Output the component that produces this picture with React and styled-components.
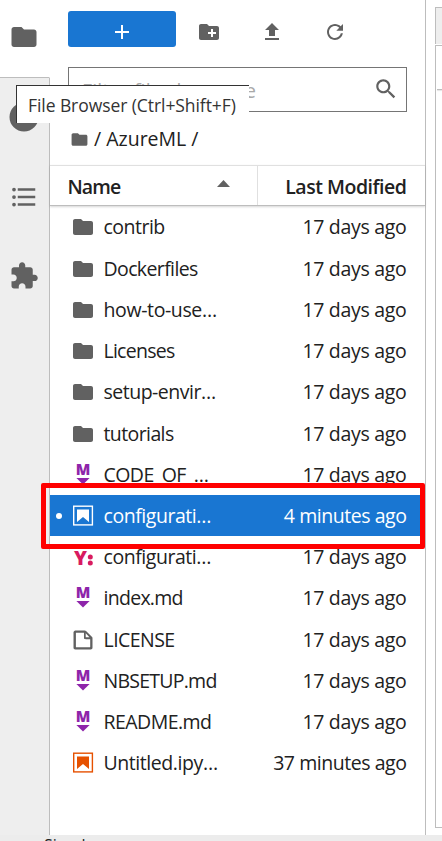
import React from "react";
import styled, { createGlobalStyle } from "styled-components";

const GlobalStyle = createGlobalStyle`
  * { box-sizing: border-box; }
  body { margin: 0; background: #fff; font-family: "Open Sans", "Noto Sans", sans-serif; }
`;

const Shell = styled.div`
  position: relative;
  width: 442px;
  height: 841px;
  overflow: hidden;
  display: flex;
  flex-direction: column;
  background: #fff;
  color: #212121;
`;
const Workspace = styled.div`
  display: flex;
  height: 835px;
  flex: none;
`;
const ActivityBar = styled.nav`
  width: 50px;
  flex: none;
  display: flex;
  flex-direction: column;
  background: #eee;
`;
const ActivityTab = styled.div`
  height: ${(p) => (p.$active ? 78 : 79.6)}px;
  flex: none;
  display: flex;
  align-items: center;
  justify-content: center;
  padding: 0 1px ${(p) => (p.$active ? 3 : 1)}px 0;
  background: ${(p) => (p.$active ? "#fff" : "transparent")};
  border-right: 1px solid ${(p) => (p.$active ? "#fff" : "#bdbdbd")};
  border-bottom: ${(p) => (p.$active ? "1px solid #bdbdbd" : "none")};
`;
const ActivityFill = styled.div`
  flex: 1;
  border-right: 1px solid #bdbdbd;
`;
const Panel = styled.section`
  width: 376px;
  flex: none;
  display: flex;
  flex-direction: column;
  border-right: 1px solid #bdbdbd;
`;
const Toolbar = styled.div`
  height: 47px;
  padding: 11px 0 0 18px;
  display: flex;
`;
const LaunchButton = styled.button`
  width: 108px;
  height: 36px;
  padding: 6px 0 0;
  border: 0;
  border-radius: 3px;
  background: #1976d2;
  display: flex;
  align-items: center;
  justify-content: center;
`;
const ToolButton = styled.button`
  width: 63px;
  height: 36px;
  padding: 6px 0 0;
  border: 0;
  background: transparent;
  display: flex;
  align-items: center;
  justify-content: center;
`;
const ToolGroup = styled.div`
  display: flex;
  padding-left: 1px;
`;
const FilterBox = styled.div`
  width: 339px;
  height: 45px;
  margin: 20px 0 0 18px;
  padding: 2px 7px 0 13px;
  border: 1px solid #757575;
  display: flex;
  align-items: center;
  justify-content: space-between;
`;
const FilterIcon = styled.span`
  padding-bottom: 4px;
`;
const Crumbs = styled.div`
  height: 53px;
  display: flex;
  align-items: center;
  padding: 1px 0 0 20.4px;
  gap: 4.6px;
`;
const Text = styled.span`
  font-size: ${(p) => p.$size || 19.5}px;
  line-height: 30px;
  font-weight: ${(p) => p.$weight || 400};
  letter-spacing: ${(p) => p.$track || 0}px;
  color: ${(p) => p.$color || "inherit"};
  white-space: nowrap;
`;
const ListHeader = styled.div`
  height: 41px;
  flex: none;
  display: flex;
  border-top: 1px solid #e0e0e0;
  border-bottom: 1px solid #bdbdbd;
  box-shadow: 0 1px 2px rgba(0, 0, 0, 0.16);
`;
const HeaderCell = styled.div`
  width: ${(p) => p.$width}px;
  display: flex;
  align-items: center;
  justify-content: space-between;
  padding: 3px ${(p) => p.$right}px 0 17.5px;
  border-right: ${(p) => (p.$divided ? "1px solid #e0e0e0" : "none")};
`;
const SortMark = styled.span`
  padding-bottom: 8px;
`;
const FileList = styled.div`
  padding-top: 0.5px;
`;
const FileRow = styled.div`
  height: 41.23px;
  width: 375px;
  display: grid;
  grid-template-columns: 21px 32.5px 1fr auto;
  align-items: center;
  padding: 0.6px 18.5px 0 0;
  background: ${(p) => (p.$selected ? "#1976d2" : "transparent")};
  color: ${(p) => (p.$selected ? "#fff" : "#212121")};
`;
const RunningDot = styled.i`
  width: 6px;
  height: 6px;
  border-radius: 50%;
  margin-left: 6px;
  background: ${(p) => (p.$on ? "#fff" : "transparent")};
`;
const MainArea = styled.main`
  width: 7px;
  height: 821px;
  margin: 7px 0 0 9px;
  flex: none;
  display: flex;
  flex-direction: column;
`;
const DockTab = styled.div`
  height: 37px;
  background: #eee;
  border: 1px solid #bdbdbd;
  border-width: 1px 0 0 1px;
`;
const DockToolbar = styled.div`
  height: 46px;
  margin-top: 1px;
  border-top: 1px solid #bdbdbd;
  border-left: 1px solid #bdbdbd;
  padding: 43px 0 0 1px;
`;
const DockRule = styled.div`
  height: 1px;
  background: #bdbdbd;
  box-shadow: 0 1px 1px rgba(0, 0, 0, 0.12);
`;
const DockBody = styled.div`
  flex: 1;
  border-left: 1px solid #bdbdbd;
  border-bottom: 1px solid #bdbdbd;
`;
const StatusBar = styled.footer`
  height: 6px;
  overflow: hidden;
  background: #ececec;
  padding-left: 44px;
  line-height: 0;
`;
const StatusText = styled.span`
  display: block;
  font-size: 16px;
  line-height: 22px;
  margin-top: -1px;
`;
const Tooltip = styled.div`
  position: absolute;
  left: 16px;
  top: 85px;
  width: 233px;
  height: 38px;
  display: flex;
  align-items: center;
  padding-left: 11px;
  background: #fff;
  border: 1px solid #333;
  border-width: 1px 0 0 1px;
`;
const Highlight = styled.div`
  position: absolute;
  left: 41px;
  top: 483px;
  width: 384px;
  height: 66px;
  border: 5px solid #ff0000;
  border-radius: 2px;
`;

const PATHS = {
  folder: "M10 4H4c-1.1 0-1.99.9-1.99 2L2 18c0 1.1.9 2 2 2h16c1.1 0 2-.9 2-2V8c0-1.1-.9-2-2-2h-8l-2-2z",
  plus: "M19 13h-6v6h-2v-6H5v-2h6V5h2v6h6v2z",
  newFolder: "M20 6h-8l-2-2H4c-1.11 0-1.99.89-1.99 2L2 18c0 1.11.89 2 2 2h16c1.11 0 2-.89 2-2V8c0-1.11-.89-2-2-2zm-1 8h-3v3h-2v-3h-3v-2h3V9h2v3h3v2z",
  upload: "M5 20h14v-2H5v2zm0-10h4v6h6v-6h4l-7-7-7 7z",
  refresh: "M9 13.5c-2.49 0-4.5-2.01-4.5-4.5S6.51 4.5 9 4.5c1.24 0 2.36.52 3.17 1.33L10 8h5V3l-1.76 1.76C12.15 3.68 10.66 3 9 3 5.69 3 3.01 5.69 3.01 9S5.69 15 9 15c2.97 0 5.43-2.16 5.9-5h-1.52c-.46 2-2.24 3.5-4.38 3.5z",
  search: "M15.5 14h-.79l-.28-.27C15.41 12.59 16 11.11 16 9.5 16 5.91 13.09 3 9.5 3S3 5.91 3 9.5 5.91 16 9.5 16c1.61 0 3.09-.59 4.23-1.57l.27.28v.79l5 4.99L20.49 19l-4.99-5zm-6 0C7.01 14 5 11.99 5 9.5S7.01 5 9.5 5 14 7.01 14 9.5 11.99 14 9.5 14z",
  running: "M12 .4a11.6 11.6 0 1 0 0 23.2a11.6 11.6 0 1 0 0-23.2z",
  toc: "M7,5H21V7H7V5M7,13V11H21V13H7M4,4.5A1.5,1.5 0 0,1 5.5,6A1.5,1.5 0 0,1 4,7.5A1.5,1.5 0 0,1 2.5,6A1.5,1.5 0 0,1 4,4.5M4,10.5A1.5,1.5 0 0,1 5.5,12A1.5,1.5 0 0,1 4,13.5A1.5,1.5 0 0,1 2.5,12A1.5,1.5 0 0,1 4,10.5M7,19V17H21V19H7M4,16.5A1.5,1.5 0 0,1 5.5,18A1.5,1.5 0 0,1 4,19.5A1.5,1.5 0 0,1 2.5,18A1.5,1.5 0 0,1 4,16.5Z",
  puzzle: "M20.5 11H19V7c0-1.1-.9-2-2-2h-4V3.5C13 2.12 11.88 1 10.5 1S8 2.12 8 3.5V5H4c-1.1 0-1.99.9-1.99 2v3.8H3.5c1.49 0 2.7 1.21 2.7 2.7s-1.21 2.7-2.7 2.7H2V20c0 1.1.9 2 2 2h3.8v-1.5c0-1.49 1.21-2.7 2.7-2.7 1.49 0 2.7 1.21 2.7 2.7V22H17c1.1 0 2-.9 2-2v-4h1.5c1.38 0 2.5-1.12 2.5-2.5S21.88 11 20.5 11z",
  file: "M19.3 8.2l-5.5-5.5c-.3-.3-.7-.5-1.2-.5H3.9c-.8.1-1.6.9-1.6 1.8v14.1c0 .9.7 1.6 1.6 1.6h14.2c.9 0 1.6-.7 1.6-1.6V9.4c.1-.5-.1-.9-.4-1.2zm-5.8-3.3l3.4 3.6h-3.4V4.9zm3.9 12.7H4.7c-.1 0-.2 0-.2-.2V4.7c0-.2.1-.3.2-.3h7.2v4.4s0 .8.3 1.1c.3.3 1.1.3 1.1.3h4.3v7.2s-.1.2-.2.2z",
};

const Svg = styled.svg`
  display: block;
  flex: none;
  overflow: visible;
`;
const GlyphText = styled.text`
  font-family: "Open Sans", sans-serif;
  font-weight: 800;
  font-size: ${(p) => p.$size}px;
`;

const Icon = ({ name, size = 24, box = 24, color = "#616161" }) => (
  <Svg width={size} height={size} viewBox={`0 0 ${box} ${box}`} fill={color}>
    <path d={PATHS[name]} />
  </Svg>
);

const FileIcon = ({ type, selected }) => {
  if (type === "folder") return <Icon name="folder" />;
  if (type === "file") return <Icon name="file" box={22} />;
  if (type === "markdown")
    return (
      <Svg width="24" height="24" fill="#8e24aa">
        <GlyphText $size={16.5} x="4.7" y="12" textLength="14.6" lengthAdjust="spacingAndGlyphs">M</GlyphText>
        <path d="M5.4 15h13.2l-6.6 6.4z" />
      </Svg>
    );
  if (type === "yaml")
    return (
      <Svg width="24" height="24" fill="#d81b60">
        <GlyphText $size={19} x="3" y="20" textLength="13" lengthAdjust="spacingAndGlyphs">Y</GlyphText>
        <circle cx="19.3" cy="11.9" r="2.5" />
        <circle cx="19.3" cy="18" r="2.5" />
      </Svg>
    );
  const color = selected ? "#fff" : "#e65100";
  return (
    <Svg width="24" height="24">
      <rect x="2.7" y="2.2" width="18.7" height="18.7" fill="none" stroke={color} strokeWidth="1.4" />
      <path d="M6 5.5h12v12.6l-6-5.2-6 5.2z" fill={color} />
    </Svg>
  );
};

const AGO = "17 days ago";
const FILES = [
  { type: "folder", name: "contrib", modified: AGO, track: -0.5 },
  { type: "folder", name: "Dockerfiles", modified: AGO, track: -0.62 },
  { type: "folder", name: "how-to-use…", modified: AGO, track: -0.38 },
  { type: "folder", name: "Licenses", modified: AGO, track: -0.74 },
  { type: "folder", name: "setup-envir…", modified: AGO, track: -0.5 },
  { type: "folder", name: "tutorials", modified: AGO, track: -0.6 },
  { type: "markdown", name: "CODE_OF_…", modified: AGO, track: -0.55 },
  { type: "notebook", name: "configurati…", modified: "4 minutes ago", track: -0.45, selected: true },
  { type: "yaml", name: "configurati…", modified: AGO, track: -0.45 },
  { type: "markdown", name: "index.md", modified: AGO, track: -0.72 },
  { type: "file", name: "LICENSE", modified: AGO, track: -0.55 },
  { type: "markdown", name: "NBSETUP.md", modified: AGO, track: -0.75 },
  { type: "markdown", name: "README.md", modified: AGO, track: -0.55 },
  { type: "notebook", name: "Untitled.ipy…", modified: "37 minutes ago", track: -0.43 },
];

export default function App() {
  return (
    <Shell>
      <GlobalStyle />
      <Workspace>
        <ActivityBar>
          <ActivityTab $active><Icon name="folder" size={30} /></ActivityTab>
          <ActivityTab><Icon name="running" size={30} /></ActivityTab>
          <ActivityTab><Icon name="toc" size={30} /></ActivityTab>
          <ActivityTab><Icon name="puzzle" size={30} /></ActivityTab>
          <ActivityFill />
        </ActivityBar>
        <Panel>
          <Toolbar>
            <LaunchButton><Icon name="plus" color="#fff" /></LaunchButton>
            <ToolGroup>
              <ToolButton><Icon name="newFolder" /></ToolButton>
              <ToolButton><Icon name="upload" /></ToolButton>
              <ToolButton><Icon name="refresh" box={18} /></ToolButton>
            </ToolGroup>
          </Toolbar>
          <FilterBox>
            <Text $color="#a9a9a9" $track={0.15}>Filter files by name</Text>
            <FilterIcon><Icon name="search" size={26} /></FilterIcon>
          </FilterBox>
          <Crumbs>
            <Icon name="folder" size={19} />
            <Text $track={0}>/ AzureML /</Text>
          </Crumbs>
          <ListHeader>
            <HeaderCell $width={208} $right={27} $divided>
              <Text $weight={600} $track={-0.9}>Name</Text>
              <SortMark><Svg width="13" height="7" fill="#616161"><path d="M0 7L6.5 0L13 7z" /></Svg></SortMark>
            </HeaderCell>
            <HeaderCell $width={167} $right={18.5}>
              <span />
              <Text $weight={600} $track={-0.48}>Last Modified</Text>
            </HeaderCell>
          </ListHeader>
          <FileList>
            {FILES.map((f, i) => (
              <FileRow key={i} $selected={f.selected}>
                <RunningDot $on={f.selected} />
                <FileIcon type={f.type} selected={f.selected} />
                <Text $track={f.track}>{f.name}</Text>
                <Text $track={f.modified === AGO ? -0.3 : -0.45}>{f.modified}</Text>
              </FileRow>
            ))}
          </FileList>
        </Panel>
        <MainArea>
          <DockTab />
          <DockToolbar><DockRule /></DockToolbar>
          <DockBody />
        </MainArea>
      </Workspace>
      <StatusBar><StatusText>Simple</StatusText></StatusBar>
      <Tooltip><Text $size={17.5} $color="#333" $track={-0.07}>File Browser (Ctrl+Shift+F)</Text></Tooltip>
      <Highlight />
    </Shell>
  );
}
